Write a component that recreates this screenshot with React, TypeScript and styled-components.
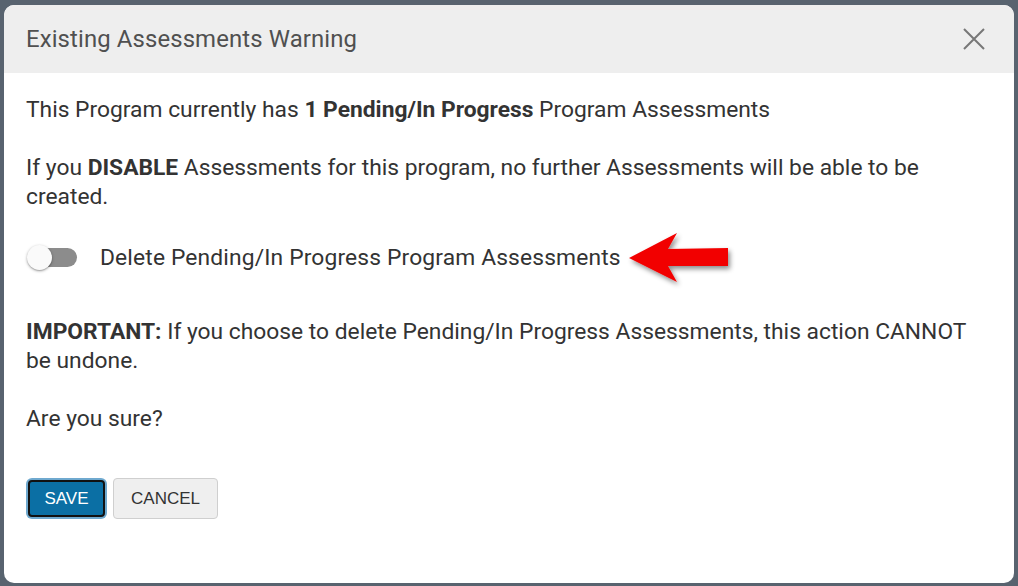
import React, { useState } from "react";
import styled, { createGlobalStyle } from "styled-components";

const GlobalStyle = createGlobalStyle`
  html, body {
    margin: 0;
    padding: 0;
    background: #58636f;
    width: 1018px;
    height: 586px;
    overflow: hidden;
  }
  * { box-sizing: border-box; }
`;

const Page = styled.div`
  width: 1018px;
  height: 586px;
  padding: 5px 4px 3px 4px;
  display: flex;
`;

const Modal = styled.div`
  flex: 1;
  background: #ffffff;
  border-radius: 10px;
  overflow: hidden;
  display: flex;
  flex-direction: column;
  font-family: Roboto, "Liberation Sans", sans-serif;
`;

const Header = styled.div`
  height: 68px;
  background: #eeeeee;
  display: flex;
  align-items: center;
  justify-content: space-between;
  padding: 0 28px 0 22px;
`;

const Title = styled.h2`
  margin: 0;
  font-size: 23.9px;
  font-weight: 400;
  color: #505050;
  letter-spacing: 0.12px;
`;

const CloseButton = styled.button`
  border: 0;
  background: transparent;
  padding: 0;
  width: 24px;
  height: 24px;
  display: flex;
  align-items: center;
  justify-content: center;
  cursor: pointer;
`;

const Body = styled.div`
  padding: 22px 22px 0 22px;
  color: #333333;
  font-size: 22.8px;
  line-height: 29px;
`;

const Para = styled.p<{ $gap?: number }>`
  margin: 0 0 ${(p) => p.$gap ?? 29}px 0;
`;

const ToggleRow = styled.div`
  display: flex;
  align-items: center;
  height: 29px;
  margin: 0 0 45px 0;
`;

const Switch = styled.button`
  position: relative;
  width: 52px;
  height: 29px;
  border: 0;
  padding: 0;
  background: transparent;
  cursor: pointer;
  margin-right: 22px;
  flex-shrink: 0;
`;

const Track = styled.span<{ $on: boolean }>`
  position: absolute;
  left: 4px;
  top: 5px;
  width: 47px;
  height: 19px;
  border-radius: 10px;
  background: ${(p) => (p.$on ? "#7fb3d5" : "#8c8c8c")};
`;

const Thumb = styled.span<{ $on: boolean }>`
  position: absolute;
  top: 2px;
  left: ${(p) => (p.$on ? "27px" : "1px")};
  width: 25px;
  height: 25px;
  border-radius: 50%;
  background: ${(p) => (p.$on ? "#0b6fa4" : "#fafafa")};
  box-shadow: 0 1px 3px rgba(0, 0, 0, 0.35), 0 1px 1px rgba(0, 0, 0, 0.12);
`;

const ToggleLabel = styled.span`
  white-space: nowrap;
  letter-spacing: 0.15px;
`;

const ArrowMark = styled.svg`
  flex-shrink: 0;
  margin-left: 1px;
  margin-top: 4px;
  overflow: visible;
`;

const Actions = styled.div`
  display: flex;
  gap: 6px;
  margin-top: 45px;
`;

const BaseButton = styled.button`
  font-family: "Liberation Sans", Arial, sans-serif;
  font-size: 17px;
  border-radius: 4px;
  cursor: pointer;
  text-transform: uppercase;
`;

const PrimaryButton = styled(BaseButton)`
  width: 77px;
  height: 37px;
  margin: 2px 0 0 2px;
  background: #0b6fa4;
  color: #ffffff;
  border: 2px solid #111111;
  box-shadow: 0 0 0 2px #6fa9cf;
`;

const SecondaryButton = styled(BaseButton)`
  width: 105px;
  height: 41px;
  margin-left: 2px;
  background: #efefef;
  color: #333333;
  border: 1px solid #cfcfcf;
`;

export default function App() {
  const [on, setOn] = useState(false);
  return (
    <>
      <GlobalStyle />
      <Page>
        <Modal>
          <Header>
            <Title>Existing Assessments Warning</Title>
            <CloseButton aria-label="Close">
              <svg width="22" height="22" viewBox="0 0 22 22">
                <path d="M1 1 L21 21 M21 1 L1 21" stroke="#777" strokeWidth="2" fill="none" />
              </svg>
            </CloseButton>
          </Header>
          <Body>
            <Para>
              This Program currently has <b>1 Pending/In Progress</b> Program Assessments
            </Para>
            <Para $gap={32}>
              If you <b>DISABLE</b> Assessments for this program, no further Assessments will be able to be
              created.
            </Para>
            <ToggleRow>
              <Switch onClick={() => setOn(!on)} aria-label="Delete Pending/In Progress Program Assessments">
                <Track $on={on} />
                <Thumb $on={on} />
              </Switch>
              <ToggleLabel>Delete Pending/In Progress Program Assessments</ToggleLabel>
              <ArrowMark width="116" height="66" viewBox="0 0 116 66">
                <defs>
                  <filter id="arrowShadow" x="-20%" y="-20%" width="150%" height="160%">
                    <feDropShadow dx="2" dy="3" stdDeviation="2.5" floodColor="#000" floodOpacity="0.45" />
                  </filter>
                </defs>
                <polygon
                  points="7,31 55,6 46,22 106,21 106,39 46,39 55,55"
                  fill="#f20000"
                  filter="url(#arrowShadow)"
                />
              </ArrowMark>
            </ToggleRow>
            <Para>
              <b>IMPORTANT:</b> If you choose to delete Pending/In Progress Assessments, this action CANNOT
              be undone.
            </Para>
            <Para $gap={0}>Are you sure?</Para>
            <Actions>
              <PrimaryButton>Save</PrimaryButton>
              <SecondaryButton>Cancel</SecondaryButton>
            </Actions>
          </Body>
        </Modal>
      </Page>
    </>
  );
}
